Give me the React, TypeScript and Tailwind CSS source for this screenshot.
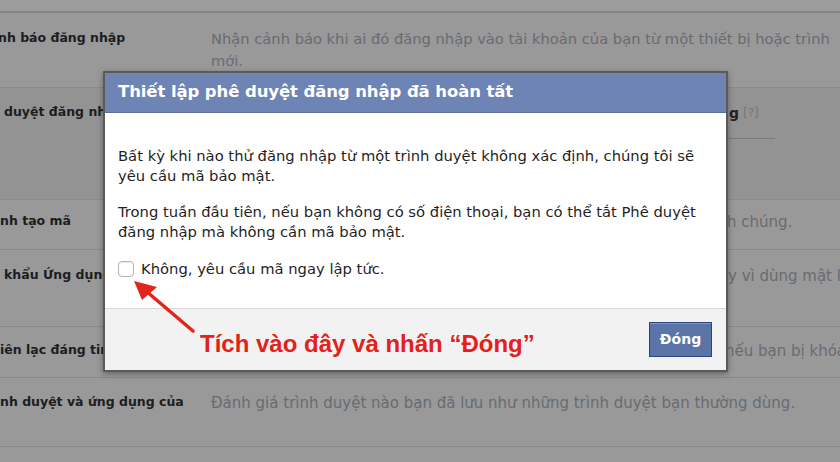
import React from "react";

const sans = { fontFamily: '"DejaVu Sans", "Liberation Sans", sans-serif' };

function Row({
  h,
  pt,
  left,
  right,
  bg = "bg-[#999999]",
}: {
  h: string;
  pt: string;
  left: React.ReactNode;
  right: React.ReactNode;
  bg?: string;
}) {
  return (
    <div className={`flex border-b border-[#8a8a8a] ${h} ${pt} ${bg}`}>
      <div className="w-[211px] shrink-0 text-[12.5px] font-bold leading-[20px] text-[#1c1d20] whitespace-nowrap overflow-hidden">
        {left}
      </div>
      <div className="flex-1 text-[15px] leading-[22px] text-[#686b72] whitespace-nowrap overflow-hidden">
        {right}
      </div>
    </div>
  );
}

export default function App() {
  return (
    <div
      className="relative w-[840px] h-[462px] overflow-hidden bg-[#999999]"
      style={sans}
    >
      {/* background settings page (dimmed) */}
      <div className="flex flex-col">
        <div className="h-[13px] bg-[#9c9c9c] border-b-2 border-[#858585]" />
        <Row
          h="h-[75px]"
          pt="pt-[15px]"
          left={<span className="block ml-[-2px]">nh báo đăng nhập</span>}
          right={
            <span className="block leading-[22px] text-[14.7px]">
              Nhận cảnh báo khi ai đó đăng nhập vào tài khoản của bạn từ một thiết bị hoặc trình
              <br />
              mới.
            </span>
          }
        />
        <Row
          h="h-[112px]"
          pt="pt-[14px]"
          bg="bg-[#939393]"
          left={<span className="block pl-[4px]">duyệt đăng nhập</span>}
          right={
            <div className="pl-[518px]">
              <div className="flex items-center gap-[4px] text-[#5e6066]">
                <span className="font-bold text-[14px] text-[#222]">g</span>
                <span className="text-[12px] text-[#777]">[?]</span>
              </div>
              <div className="mt-[14px] w-[46px] h-px bg-[#7a7a7a]" />
            </div>
          }
        />
        <Row
          h="h-[50px]"
          pt="pt-[11px]"
          left={<span className="block">nh tạo mã</span>}
          right={<span className="block pl-[516px]">h chúng.</span>}
        />
        <Row
          h="h-[77px]"
          pt="pt-[15px]"
          left={<span className="block pl-[4px]">khẩu Ứng dụng</span>}
          right={<span className="block pl-[517px]">y vì dùng mật k</span>}
        />
        <Row
          h="h-[51px]"
          pt="pt-[13px]"
          left={<span className="block">iên lạc đáng tin cậy</span>}
          right={<span className="block pl-[514px]">nếu bạn bị khóa</span>}
        />
        <Row
          h="h-[69px]"
          pt="pt-[14px]"
          left={<span className="block">nh duyệt và ứng dụng của</span>}
          right={
            <span className="block">
              Đánh giá trình duyệt nào bạn đã lưu như những trình duyệt bạn thường dùng.
            </span>
          }
        />
        <div className="h-[40px] bg-[#999999]" />
      </div>

      {/* modal */}
      <div className="absolute left-[103px] top-[71px] w-[625px] border-2 border-[#5a5a5a] bg-white shadow-[0_2px_6px_rgba(0,0,0,0.35)]">
        <div className="h-[40px] bg-[#6d84b4] border-b border-[#5b70a0] pl-[13px] flex items-center">
          <span className="text-white font-bold text-[16.5px] tracking-[-0.1px]">
            Thiết lập phê duyệt đăng nhập đã hoàn tất
          </span>
        </div>
        <div className="pl-[13px] pr-[8px] pt-[33px] pb-[29px] text-[14.75px] leading-[20px] text-[#1f1f1f] whitespace-nowrap">
          <p>
            Bất kỳ khi nào thử đăng nhập từ một trình duyệt không xác định, chúng tôi sẽ
            <br />
            yêu cầu mã bảo mật.
          </p>
          <p className="mt-[16px]">
            Trong tuần đầu tiên, nếu bạn không có số điện thoại, bạn có thể tắt Phê duyệt
            <br />
            đăng nhập mà không cần mã bảo mật.
          </p>
          <div className="mt-[17px] flex items-center gap-[7px]">
            <span className="w-[16px] h-[16px] rounded-[4px] border border-[#b5b5b5] bg-white shadow-[inset_0_1px_1px_rgba(0,0,0,0.08)]" />
            <span>Không, yêu cầu mã ngay lập tức.</span>
          </div>
        </div>
        <div className="h-[62px] bg-[#f2f2f2] border-t border-[#d9d9d9] flex items-center justify-end pr-[14px]">
          <button className="w-[63px] h-[35px] bg-[#5b74a8] border border-[#29447e] text-white font-bold text-[14px] shadow-[inset_0_1px_0_rgba(255,255,255,0.25)]">
            Đóng
          </button>
        </div>
      </div>

      {/* annotation arrow */}
      <svg
        className="absolute left-0 top-0"
        width="840"
        height="462"
        viewBox="0 0 840 462"
      >
        <line x1="193" y1="331" x2="146" y2="291" stroke="#e0261d" strokeWidth="3.5" strokeLinecap="round" />
        <polygon points="134,281 157,287 142,300" fill="#e0261d" />
      </svg>

      {/* annotation text */}
      <div
        className="absolute left-[200px] top-[328px] text-[24px] leading-[32px] font-bold text-[#e3211a] whitespace-nowrap"
        style={{ fontFamily: '"Liberation Sans", Arial, sans-serif' }}
      >
        Tích vào đây và nhấn “Đóng”
      </div>
    </div>
  );
}
